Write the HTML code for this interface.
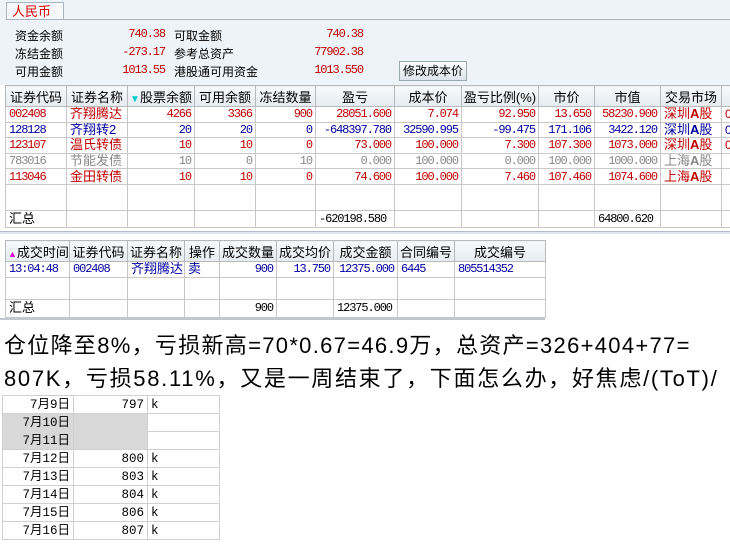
<!DOCTYPE html>
<html><head><meta charset="utf-8"><style>
*{margin:0;padding:0;box-sizing:border-box}
body{width:730px;height:547px;background:#fff;font-family:"Liberation Sans","Noto Sans CJK SC",sans-serif;font-size:12px;position:relative;overflow:hidden;color:#000}
.a{position:absolute;white-space:nowrap}
.top{position:absolute;left:0;top:0;width:730px;height:85px;background:#eef3f7}
.tab{position:absolute;left:6px;top:2px;width:58px;height:18px;border:1px solid #a8b4c0;border-bottom:none;background:#f6f8fa;color:#d00;font-size:13px;padding-left:5px;line-height:17px}
.hl{position:absolute;left:6px;top:19px;width:724px;height:1px;background:#a8b4c0}
.r{color:#c00000}.b{color:#0000a0}.g{color:#888}.k{color:#000}
table{border-collapse:collapse;position:absolute;table-layout:fixed}
td{border:1px solid #c8c8c8;height:15.6px;padding:0 3px;white-space:nowrap;overflow:hidden;font-size:12px;line-height:14px}
th{border:1px solid #b8b8b8;background:linear-gradient(#f7f9fb,#e6ecf1);font-weight:normal;font-size:13px;height:21px;white-space:nowrap;overflow:hidden}
.n{text-align:right}
.m{font-family:"Liberation Mono","Noto Sans CJK SC",monospace;font-size:12px;letter-spacing:-1.1px}
.big{font-size:22px;letter-spacing:1.3px;font-family:"Liberation Sans","Noto Sans CJK SC",sans-serif}
.x td{border:1px solid #d0d0d0;height:18px;font-family:"Liberation Mono","Noto Sans CJK SC",monospace;font-size:12.5px;padding:0 3px}
</style></head><body>
<div class="top"></div>
<div class="tab">人民币</div>
<div class="hl"></div>
<div class="a" style="left:15px;top:27px;font-size:12px">资金余额</div>
<div class="a" style="left:15px;top:45px">冻结金额</div>
<div class="a" style="left:15px;top:63px">可用金额</div>
<div class="a r m" style="left:108px;top:27px;width:57px;text-align:right">740.38</div>
<div class="a r m" style="left:108px;top:45px;width:57px;text-align:right">-273.17</div>
<div class="a r m" style="left:108px;top:63px;width:57px;text-align:right">1013.55</div>
<div class="a" style="left:174px;top:27px">可取金额</div>
<div class="a" style="left:174px;top:45px">参考总资产</div>
<div class="a" style="left:174px;top:63px">港股通可用资金</div>
<div class="a r m" style="left:300px;top:27px;width:63px;text-align:right">740.38</div>
<div class="a r m" style="left:300px;top:45px;width:63px;text-align:right">77902.38</div>
<div class="a r m" style="left:300px;top:63px;width:63px;text-align:right">1013.550</div>
<div class="a" style="left:399px;top:61px;width:68px;height:20px;border:1px solid #9aa;background:linear-gradient(#fafcfd,#dde4ea);text-align:center;line-height:18px;font-size:12px">修改成本价</div>

<table style="left:5px;top:85px;width:725px">
<colgroup><col style="width:61px"><col style="width:61px"><col style="width:67px"><col style="width:61px"><col style="width:60px"><col style="width:79px"><col style="width:67px"><col style="width:77px"><col style="width:56px"><col style="width:66px"><col style="width:61px"><col style="width:9px"></colgroup>
<tr><th>证券代码</th><th>证券名称</th><th><span style="color:#0cc;font-size:10px">▼</span>股票余额</th><th>可用余额</th><th>冻结数量</th><th>盈亏</th><th>成本价</th><th>盈亏比例(%)</th><th>市价</th><th>市值</th><th>交易市场</th><th></th></tr>
<tr class="r"><td class="m">002408</td><td style="font-size:13px">齐翔腾达</td><td class="n m">4266</td><td class="n m">3366</td><td class="n m">900</td><td class="n m">28051.600</td><td class="n m">7.074</td><td class="n m">92.950</td><td class="n m">13.650</td><td class="n m">58230.900</td><td style="font-size:13px">深圳<b>A</b>股</td><td>0</td></tr>
<tr class="b"><td class="m">128128</td><td style="font-size:13px">齐翔转2</td><td class="n m">20</td><td class="n m">20</td><td class="n m">0</td><td class="n m">-648397.780</td><td class="n m">32590.995</td><td class="n m">-99.475</td><td class="n m">171.106</td><td class="n m">3422.120</td><td style="font-size:13px">深圳<b>A</b>股</td><td>0</td></tr>
<tr class="r"><td class="m">123107</td><td style="font-size:13px">温氏转债</td><td class="n m">10</td><td class="n m">10</td><td class="n m">0</td><td class="n m">73.000</td><td class="n m">100.000</td><td class="n m">7.300</td><td class="n m">107.300</td><td class="n m">1073.000</td><td style="font-size:13px">深圳<b>A</b>股</td><td>0</td></tr>
<tr class="g"><td class="m">783016</td><td style="font-size:13px">节能发债</td><td class="n m">10</td><td class="n m">0</td><td class="n m">10</td><td class="n m">0.000</td><td class="n m">100.000</td><td class="n m">0.000</td><td class="n m">100.000</td><td class="n m">1000.000</td><td style="font-size:13px">上海<b>A</b>股</td><td></td></tr>
<tr class="r"><td class="m">113046</td><td style="font-size:13px">金田转债</td><td class="n m">10</td><td class="n m">10</td><td class="n m">0</td><td class="n m">74.600</td><td class="n m">100.000</td><td class="n m">7.460</td><td class="n m">107.460</td><td class="n m">1074.600</td><td style="font-size:13px">上海<b>A</b>股</td><td></td></tr>
<tr><td style="height:26px"></td><td></td><td></td><td></td><td></td><td></td><td></td><td></td><td></td><td></td><td></td><td></td></tr>
<tr><td style="font-size:13px;height:17px">汇总</td><td></td><td></td><td></td><td></td><td class="m">-620198.580</td><td></td><td></td><td></td><td class="m">64800.620</td><td></td><td></td></tr>
</table>
<div class="a" style="left:0;top:231px;width:730px;height:3px;background:#dfe6ee;border-top:1px solid #b0bccc"></div>

<table style="left:5px;top:240px;width:540px">
<colgroup><col style="width:64px"><col style="width:58px"><col style="width:57px"><col style="width:35px"><col style="width:57px"><col style="width:57px"><col style="width:64px"><col style="width:57px"><col style="width:91px"></colgroup>
<tr><th style="text-align:left;padding-left:2px"><span style="color:#d0d;font-size:9px">▲</span>成交时间</th><th>证券代码</th><th>证券名称</th><th>操作</th><th>成交数量</th><th>成交均价</th><th>成交金额</th><th>合同编号</th><th>成交编号</th></tr>
<tr class="b"><td class="m">13:04:48</td><td class="m">002408</td><td style="font-size:13px">齐翔腾达</td><td style="font-size:13px">卖</td><td class="n m">900</td><td class="n m">13.750</td><td class="n m">12375.000</td><td class="m">6445</td><td class="m">805514352</td></tr>
<tr><td style="height:22px"></td><td></td><td></td><td></td><td></td><td></td><td></td><td></td><td></td></tr>
<tr><td style="font-size:13px;height:18px">汇总</td><td></td><td></td><td></td><td class="n m">900</td><td></td><td class="m">12375.000</td><td></td><td></td></tr>
</table>
<div class="a" style="left:0;top:318px;width:545px;height:2px;background:#c0c8d0"></div>

<div class="a big" style="left:4px;top:328px">仓位降至8%，亏损新高=70*0.67=46.9万，总资产=326+404+77=</div>
<div class="a big" style="left:4px;top:361px;letter-spacing:1.7px">807K，亏损58.11%，又是一周结束了，下面怎么办，好焦虑/(ToT)/</div>

<table class="x" style="left:2px;top:395px;width:217px">
<colgroup><col style="width:71px"><col style="width:74px"><col style="width:72px"></colgroup>
<tr><td class="n">7月9日</td><td class="n">797</td><td>k</td></tr>
<tr><td class="n" style="background:#d8d8d8;border-bottom-color:#d8d8d8">7月10日</td><td style="background:#d8d8d8;border-left-color:#d8d8d8;border-bottom-color:#d8d8d8"></td><td></td></tr>
<tr><td class="n" style="background:#d8d8d8">7月11日</td><td style="background:#d8d8d8;border-left-color:#d8d8d8"></td><td></td></tr>
<tr><td class="n">7月12日</td><td class="n">800</td><td>k</td></tr>
<tr><td class="n">7月13日</td><td class="n">803</td><td>k</td></tr>
<tr><td class="n">7月14日</td><td class="n">804</td><td>k</td></tr>
<tr><td class="n">7月15日</td><td class="n">806</td><td>k</td></tr>
<tr><td class="n">7月16日</td><td class="n">807</td><td>k</td></tr>
</table>
</body></html>
